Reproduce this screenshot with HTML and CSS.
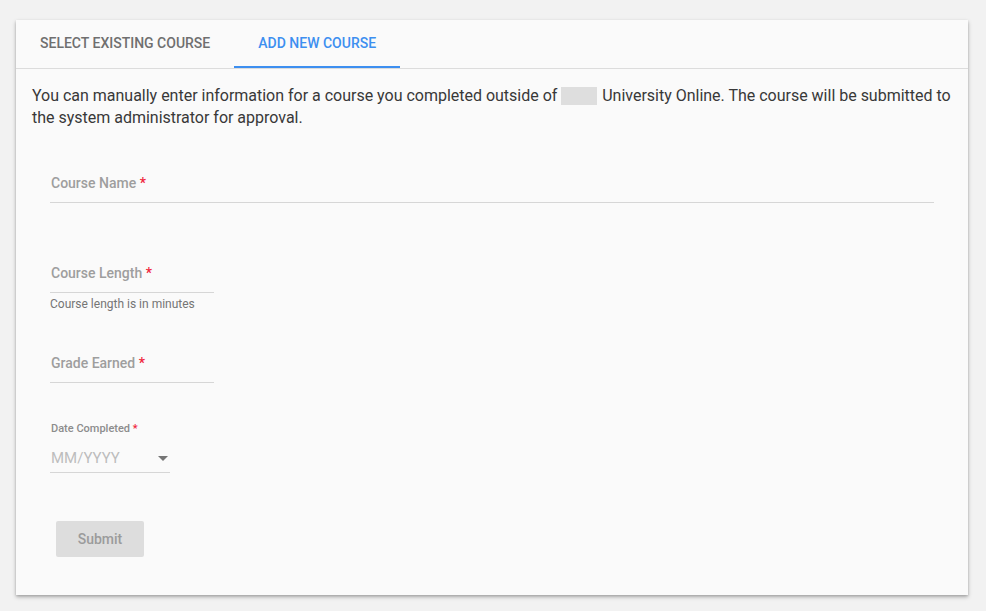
FILE: index.html
```html
<!DOCTYPE html>
<html>
<head>
<meta charset="utf-8">
<link rel="stylesheet" href="styles.css">
</head>
<body>
<div class="card">
  <div class="tabs">
    <div class="tab">Select Existing Course</div>
    <div class="tab active">Add New Course</div>
  </div>
  <div class="content">
    <p class="intro">You can manually enter information for a course you completed outside of <span class="blur"></span> University Online. The course will be submitted to the system administrator for approval.</p>
    <div class="form">
      <div class="field full"><span class="label">Course Name <span class="req">*</span></span></div>
      <div class="field short gap1"><span class="label">Course Length <span class="req">*</span></span></div>
      <div class="helper">Course length is in minutes</div>
      <div class="field short gap2"><span class="label">Grade Earned <span class="req">*</span></span></div>
      <div class="datefield">
        <div class="small-label">Date Completed <span class="req">*</span></div>
        <div class="select">
          <span class="placeholder">MM/YYYY</span>
          <svg class="arrow" width="10" height="5" viewBox="0 0 10 5"><path d="M0 0h10L5 5z" fill="#757575"/></svg>
        </div>
      </div>
      <button class="submit">Submit</button>
    </div>
  </div>
</div>
</body>
</html>
```

FILE: styles.css
```css
* { box-sizing: border-box; }
html, body { margin: 0; padding: 0; }
body {
  background: #f2f2f2;
  font-family: Roboto, "Liberation Sans", Arial, sans-serif;
  padding: 20px 18px 16px 16px;
}
.card {
  width: 952px;
  background: #fafafa;
  padding-bottom: 38px;
  box-shadow: 0 2px 4px rgba(0,0,0,0.28), 0 1px 2px rgba(0,0,0,0.12);
}
.tabs {
  display: flex;
  height: 49px;
  border-bottom: 1px solid #dcdcdc;
}
.tab {
  padding: 0 24px;
  height: 48px;
  line-height: 47px;
  font-size: 14px;
  font-weight: 500;
  text-transform: uppercase;
  color: #6f6f6f;
  border-bottom: 2px solid transparent;
}
.tab.active {
  color: #3d8ff0;
  border-bottom-color: #3d8ff0;
}
.content {
  padding: 0 16px;
}
.intro {
  margin: 16px 0 0;
  font-size: 16px;
  line-height: 22px;
  color: #383838;
  letter-spacing: -0.01px;
}
.blur {
  display: inline-block;
  width: 36px;
  height: 18px;
  background: #dedede;
  vertical-align: -4px;
  margin-right: 1px;
}
.form {
  padding: 0 18px;
}
.field {
  border-bottom: 1px solid #d6d6d6;
  padding-bottom: 9px;
}
.field.full { margin-top: 44px; }
.field.short { width: 164px; }
.gap1 { margin-top: 60px; }
.gap2 { margin-top: 41px; }
.label {
  display: block;
  font-size: 14px;
  line-height: 20px;
  font-weight: 500;
  color: #9e9e9e;
  padding-left: 1px;
}
.req { color: #f0243a; }
.helper {
  margin-top: 3px;
  font-size: 12px;
  line-height: 16px;
  color: #757575;
}
.datefield {
  margin-top: 39px;
  width: 120px;
}
.small-label {
  font-size: 11px;
  line-height: 14px;
  font-weight: 500;
  color: #8c8c8c;
  padding-left: 1px;
}
.select {
  margin-top: 12px;
  display: flex;
  align-items: center;
  justify-content: space-between;
  border-bottom: 1px solid #d6d6d6;
  padding: 0 2px 4px 1px;
  height: 25px;
}
.placeholder {
  font-size: 15px;
  line-height: 20px;
  color: #bdbdbd;
}
.submit {
  display: block;
  margin: 48px 0 0 6px;
  width: 88px;
  height: 36px;
  border: none;
  border-radius: 2px;
  background: #dddddd;
  color: #9b9b9b;
  font-family: Roboto, "Liberation Sans", Arial, sans-serif;
  font-size: 14px;
  font-weight: 500;
  padding: 0;
}
```
